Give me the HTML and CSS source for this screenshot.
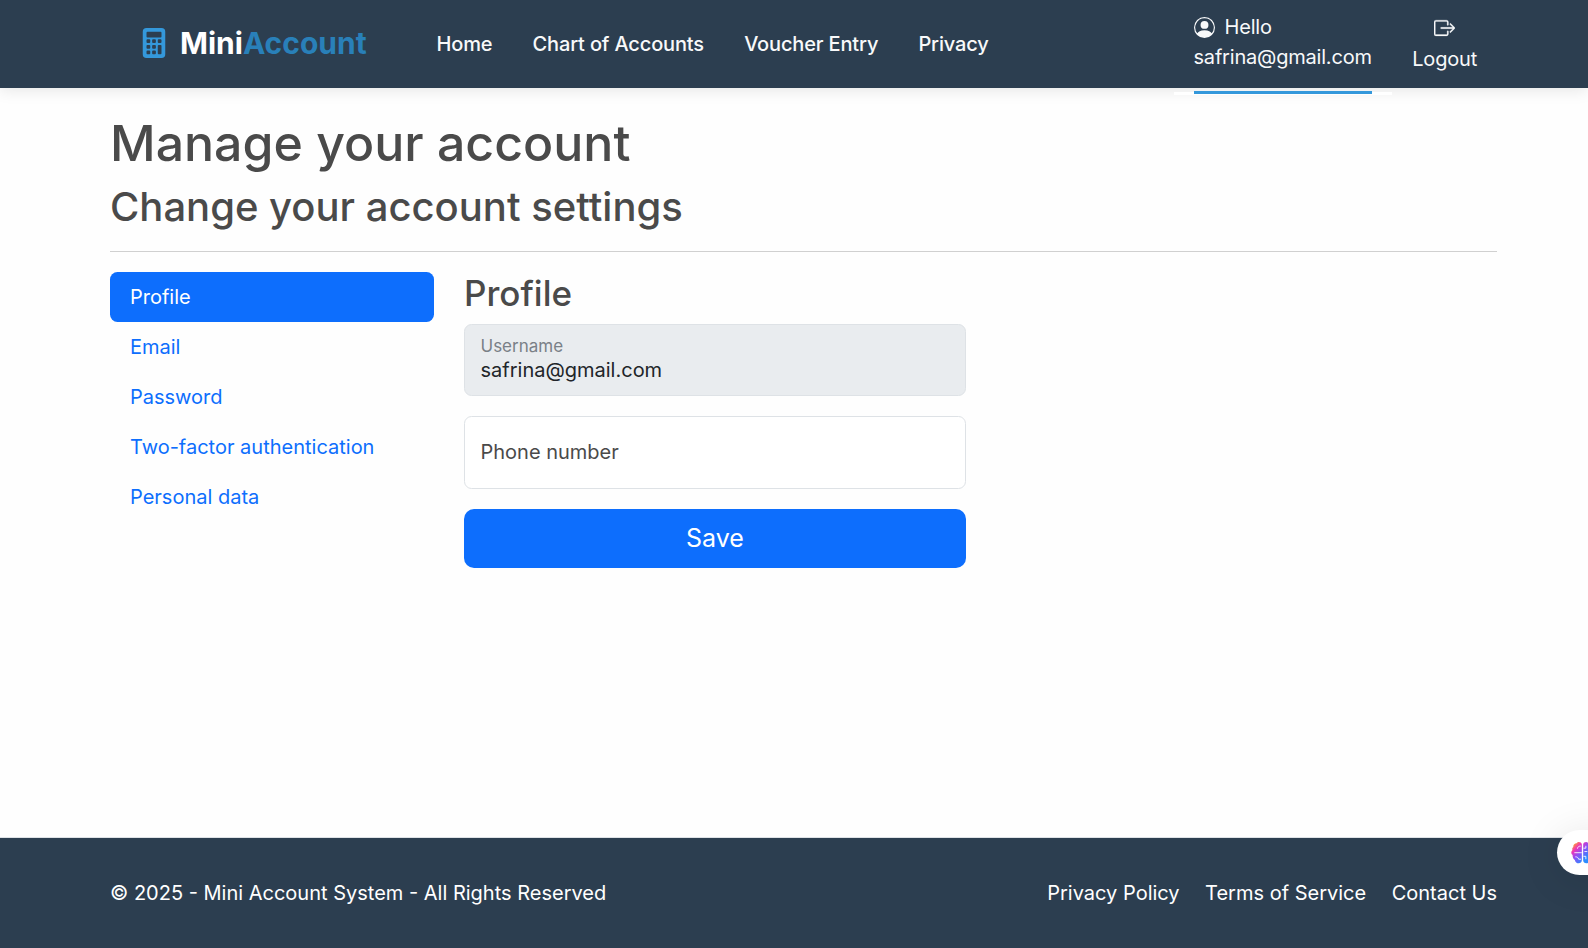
FILE: index.html
```html
<!DOCTYPE html>
<html lang="en">
<head>
<meta charset="utf-8">
<title>Profile - Mini Account System</title>
<link rel="stylesheet" href="styles.css">
</head>
<body>
<header class="navbar">
  <a class="brand">
    <svg class="brand-icon" viewBox="0 0 16 16" fill="currentColor"><path fill-rule="evenodd" d="M4 0h8a2 2 0 0 1 2 2v12a2 2 0 0 1-2 2H4a2 2 0 0 1-2-2V2a2 2 0 0 1 2-2zm0 2.500v2a.5.5 0 0 0 .5.5h7a.5.5 0 0 0 .5-.5v-2a.5.5 0 0 0-.5-.5h-7a.5.5 0 0 0-.5.5zm0 4v1a.5.5 0 0 0 .5.5h1a.5.5 0 0 0 .5-.5v-1a.5.5 0 0 0-.5-.5h-1a.5.5 0 0 0-.5.5zM4.500 9a.5.5 0 0 0-.5.5v1a.5.5 0 0 0 .5.5h1a.5.5 0 0 0 .5-.5v-1a.5.5 0 0 0-.5-.5zM4 12.500v1a.5.5 0 0 0 .5.5h1a.5.5 0 0 0 .5-.5v-1a.5.5 0 0 0-.5-.5h-1a.5.5 0 0 0-.5.5zM7.500 6a.5.5 0 0 0-.5.5v1a.5.5 0 0 0 .5.5h1a.5.5 0 0 0 .5-.5v-1a.5.5 0 0 0-.5-.5zM7 9.500v1a.5.5 0 0 0 .5.5h1a.5.5 0 0 0 .5-.5v-1a.5.5 0 0 0-.5-.5h-1a.5.5 0 0 0-.5.5zm.5 2.500a.5.5 0 0 0-.5.5v1a.5.5 0 0 0 .5.5h1a.5.5 0 0 0 .5-.5v-1a.5.5 0 0 0-.5-.5zM10 6.500v1a.5.5 0 0 0 .5.5h1a.5.5 0 0 0 .5-.5v-1a.5.5 0 0 0-.5-.5h-1a.5.5 0 0 0-.5.5zm.5 2.500a.5.5 0 0 0-.5.5v4a.5.5 0 0 0 .5.5h1a.5.5 0 0 0 .5-.5v-4a.5.5 0 0 0-.5-.5z"/></svg>
    <span class="brand-name">Mini<span class="brand-accent">Account</span></span>
  </a>
  <nav class="nav-main">
    <a>Home</a><a>Chart of Accounts</a><a>Voucher Entry</a><a>Privacy</a>
  </nav>
  <div class="nav-user">
    <a class="user-link">
      <span class="hello"><svg class="user-icon" viewBox="0 0 16 16" fill="currentColor"><path d="M11 6a3 3 0 1 1-6 0 3 3 0 0 1 6 0"/><path fill-rule="evenodd" d="M0 8a8 8 0 1 1 16 0A8 8 0 0 1 0 8m8-7a7 7 0 0 0-5.468 11.370C3.242 11.226 4.805 10 8 10s4.757 1.225 5.468 2.370A7 7 0 0 0 8 1"/></svg>Hello</span>
      <span class="email">safrina@gmail.com</span>
    </a>
    <a class="logout">
      <svg class="logout-icon" viewBox="0 0 16 16" fill="currentColor"><path d="M10 12.500a.5.5 0 0 1-.5.5h-8a.5.5 0 0 1-.5-.5v-9a.5.5 0 0 1 .5-.5h8a.5.5 0 0 1 .5.5v2a.5.5 0 0 0 1 0v-2A1.500 1.500 0 0 0 9.500 2h-8A1.500 1.500 0 0 0 0 3.500v9A1.500 1.500 0 0 0 1.500 14h8a1.500 1.500 0 0 0 1.500-1.500v-2a.5.5 0 0 0-1 0z"/><path d="M15.854 8.354a.5.5 0 0 0 0-.708l-3-3a.5.5 0 0 0-.708.708L14.293 7.500H5.500a.5.5 0 0 0 0 1h8.793l-2.147 2.146a.5.5 0 0 0 .708.708z"/></svg>
      <span>Logout</span>
    </a>
  </div>
</header>
<main class="content">
  <h1>Manage your account</h1>
  <h2>Change your account settings</h2>
  <hr>
  <div class="columns">
    <nav class="side">
      <a class="active">Profile</a><a>Email</a><a>Password</a><a>Two-factor authentication</a><a>Personal data</a>
    </nav>
    <section class="profile">
      <h3>Profile</h3>
      <div class="field disabled"><span class="label">Username</span><span class="value">safrina@gmail.com</span></div>
      <div class="field empty">Phone number</div>
      <button class="save">Save</button>
    </section>
  </div>
</main>
<footer class="footer">
  <span class="copy">© 2025 - Mini Account System - All Rights Reserved</span>
  <nav class="foot-links"><a>Privacy Policy</a><a>Terms of Service</a><a>Contact Us</a></nav>
</footer>
<div class="assistant">
  <svg class="brain" viewBox="0 0 24 24">
    <defs><linearGradient id="hue" gradientUnits="userSpaceOnUse" x1="3" y1="3" x2="17" y2="17"><stop offset="0" stop-color="#ff9a2e"/><stop offset=".25" stop-color="#ee35b8"/><stop offset=".55" stop-color="#8f4df5"/><stop offset="1" stop-color="#2c8cff"/></linearGradient></defs>
    <path fill="url(#hue)" d="M11.300 3.500C10.800.8 7.300.2 5.800 2.300 3.700 2.300 2.200 4 2.400 6.200 1.200 7 1.100 8.500 1.500 9.500-.3 11 0 13.700 1.700 14.700 1.500 17 2.500 18.800 4 19.700 4.500 22.500 7 23.700 9 23c1.500-.4 2.300-1.500 2.300-3zM12.700 3.500C13.200.8 16.700.2 18.200 2.300c2.100 0 3.600 1.700 3.400 3.900 1.200.8 1.300 2.300.9 3.300 1.800 1.500 1.500 4.200-.2 5.200.2 2.300-.8 4.100-2.300 5-.5 2.800-3 4-5 3.300-1.500-.4-2.300-1.500-2.300-3z"/>
    <path fill="none" stroke="#fff" stroke-width=".9" d="M11.300 12.200H3.500M10.200 5.300C8 5.300 7 6.200 6.700 8M4.500 16.500c2 0 3 .7 3.500 2.500h2.500M13 7.500h2.500V5M14 11h3M13 16h2.500v3"/>
  </svg>
</div>
</body>
</html>
```
FILE: styles.css
```css
* { box-sizing: border-box; }

body {
  margin: 0;
  height: 948px;
  overflow: hidden;
  display: flex;
  flex-direction: column;
  position: relative;
  background: #fefefe;
  color: #4a4a4a;
  font: 400 20px/30px Inter, sans-serif;
}

h1, h2, h3 { margin: 0; font-weight: 500; line-height: 1.2; }

.navbar {
  position: relative;
  z-index: 0;
  height: 88px;
  flex: none;
  display: flex;
  align-items: flex-start;
  padding: 0 111px 0 139.3px;
  background: #2c3e50;
  color: #f8f9fa;
  box-shadow: 0 2px 15px rgba(0, 0, 0, .1);
}

.brand { display: flex; align-items: center; height: 86px; width: 297.2px; }
.brand-icon { width: 30px; height: 30px; color: #3498db; margin-right: 10.7px; }
.brand-name { font-size: 30px; font-weight: 700; line-height: 45px; color: #fff; }
.brand-accent { color: #2980b9; }

.nav-main {
  display: flex;
  gap: 40.2px;
  padding-top: 29px;
  font-weight: 500;
  letter-spacing: -.15px;
}

.nav-user { display: flex; margin-left: auto; letter-spacing: -.2px; }
.user-link {
  position: relative;
  display: flex;
  flex-direction: column;
  height: 94px;
  padding-top: 12px;
  border-bottom: 3px solid #3498db;
  margin-right: 40.5px;
}
/* Light strip on both sides of the active underline */
.user-link::before {
  content: "";
  position: absolute;
  z-index: -1;
  left: -20px;
  right: -20px;
  bottom: -4px;
  height: 3px;
  background: #fff;
}
.hello { display: flex; align-items: center; gap: 10px; }
.user-icon { width: 21px; height: 21px; }
.logout { display: flex; flex-direction: column; align-items: center; padding-top: 17px; }
.logout-icon { width: 21px; height: 22px; margin-bottom: 5px; stroke: currentColor; stroke-width: .2; }

.content { flex: 1; width: 1497px; padding: 25px 0 0 110px; }
h1 { font-size: 50px; height: 60px; margin-bottom: 10px; }
h2 { font-size: 40px; height: 48px; margin-bottom: 20px; }
hr { height: 1px; margin: 0 0 20px; border: 0; background: #d0d0d0; }

.columns { display: flex; gap: 30px; }
.side { width: 324px; display: flex; flex-direction: column; color: #0d6efd; }
.side a { height: 50px; padding: 10px 20px; border-radius: 7.5px; }
.side .active { background: #0d6efd; color: #fff; }

.profile { width: 502px; display: flex; flex-direction: column; }
h3 { font-size: 35px; height: 42px; margin-bottom: 10px; }
.field {
  display: flex;
  flex-direction: column;
  height: 72px;
  margin-bottom: 20px;
  padding: 0 15.5px;
  border: 1px solid #dee2e6;
  border-radius: 7.5px;
  background: #fff;
}
.disabled { background: #e9ecef; }
.label { font-size: 17px; line-height: 26px; margin-top: 8px; color: #7a8087; }
.value { line-height: 24px; margin-top: -1px; color: #212529; }
.empty { height: 73px; padding-top: 20px; }
.save {
  height: 59px;
  padding: 0 0 2px;
  border: 0;
  border-radius: 10px;
  background: #0d6efd;
  color: #fff;
  font: 400 25px/38px Inter, sans-serif;
}

.footer {
  flex: none;
  height: 111px;
  display: flex;
  align-items: center;
  justify-content: space-between;
  padding: 0 91px 0 110px;
  border-top: 1px solid #dee2e6;
  background: #2c3e50;
  color: #fff;
}
.foot-links { display: flex; gap: 25.5px; }

/* Floating button that hangs over the right edge of the page */
.assistant {
  position: absolute;
  top: 830px;
  left: 1557px;
  width: 70px;
  height: 45px;
  padding: 11px 0 0 14px;
  border-radius: 23px;
  background: #fff;
  box-shadow: 0 4px 40px rgba(0, 0, 0, .1);
}
.brain { display: block; width: 23px; height: 23px; }
```
